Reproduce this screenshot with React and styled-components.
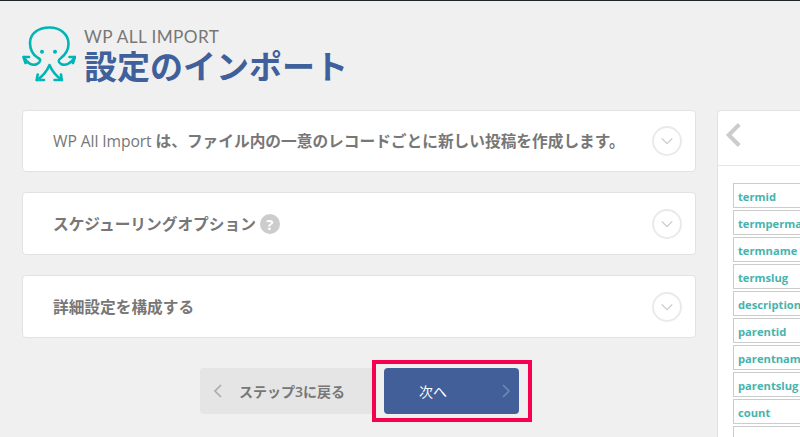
import styled, { createGlobalStyle } from 'styled-components';

const GlobalStyle = createGlobalStyle`
    html, body {
        margin: 0;
        padding: 0;
        background-color: #f1f1f1;
    }
    * {
        box-sizing: border-box;
    }
`;

const fontStack = `"Open Sans", "Noto Sans CJK JP", sans-serif`;

const Page = styled.div`
    width: 800px;
    height: 437px;
    overflow: hidden;
    border-top: 1px solid #1d2327;
    background-color: #f0f0f0;
    font-family: ${fontStack};
    padding: 24px 0 0 22px;
`;

const Header = styled.header`
    display: flex;
    align-items: flex-start;
    height: 85px;
    gap: 8px;
`;

const Titles = styled.div`
    display: flex;
    flex-direction: column;
    padding-top: 2px;
`;

const Brand = styled.div`
    font-family: Lato, sans-serif;
    font-size: 17.2px;
    line-height: 20px;
    letter-spacing: 0.4px;
    color: #777;
`;

const Title = styled.h1`
    margin: 1px 0 0;
    font-size: 33px;
    line-height: 38px;
    font-weight: 700;
    color: #40609b;
    white-space: nowrap;
`;

const Columns = styled.div`
    display: flex;
    align-items: flex-start;
    gap: 21px;
    width: 900px;
`;

const Main = styled.main`
    display: flex;
    flex-direction: column;
    width: 674px;
    flex-shrink: 0;
`;

const Card = styled.section`
    display: flex;
    align-items: center;
    justify-content: space-between;
    height: ${(p) => p.$height}px;
    margin-bottom: 20px;
    padding: 0 13px 0 30px;
    background-color: white;
    border: 1px solid #e2e2e2;
    border-radius: 4px;
`;

const CardTitle = styled.h3`
    margin: 0;
    font-size: 15.7px;
    line-height: 20px;
    font-weight: 600;
    color: #777;
    white-space: nowrap;
`;

const Latin = styled.span`
    font-weight: 400;
    letter-spacing: -0.1px;
`;

const Help = styled.span`
    display: inline-flex;
    align-items: center;
    justify-content: center;
    width: 20px;
    height: 20px;
    margin-left: 4px;
    vertical-align: top;
    border-radius: 50%;
    background-color: #ccc;
    color: white;
    font-size: 15px;
    font-weight: 700;
`;

const Toggle = styled.span`
    display: flex;
    align-items: center;
    justify-content: center;
    width: 30px;
    height: 30px;
    border: 2px solid #eaeaea;
    border-radius: 50%;
`;

const Actions = styled.div`
    display: flex;
    align-items: center;
    margin: 2px 0 0 178px;
`;

const BackButton = styled.button`
    display: flex;
    align-items: center;
    width: 172px;
    height: 46px;
    padding: 0 0 0 10px;
    gap: 13px;
    border: 0;
    border-radius: 4px 0 0 4px;
    background-color: #e4e5e4;
    color: #777;
    font-family: ${fontStack};
    font-size: 14px;
    font-weight: 600;
`;

const Highlight = styled.div`
    padding: 4px 9px 4px 8px;
    border: 4px solid #f6004f;
`;

const NextButton = styled.button`
    display: flex;
    align-items: center;
    justify-content: space-between;
    width: 135px;
    height: 46px;
    padding: 0 5px 0 35px;
    border: 0;
    border-radius: 4px;
    background-color: #425f9a;
    color: white;
    font-family: ${fontStack};
    font-size: 14px;
    font-weight: 400;
`;

const Side = styled.aside`
    width: 200px;
    flex-shrink: 0;
    background-color: white;
    border: 1px solid #e2e2e2;
    border-radius: 4px 0 0 0;
    height: 340px;
`;

const SideHead = styled.div`
    display: flex;
    align-items: center;
    height: 55px;
    padding: 0 0 7px 2px;
    border-bottom: 1px solid #e6e6e6;
`;

const ChipList = styled.ul`
    display: flex;
    flex-direction: column;
    gap: 2px;
    margin: 0;
    padding: 17px 0 0 15px;
    list-style: none;
`;

const Chip = styled.li`
    display: flex;
    align-items: center;
    width: 120px;
    height: 25px;
    padding: 2px 0 0 4px;
    border: 1px solid #ccc;
    background-color: white;
    color: #46b3ad;
    font-size: 11.2px;
    font-weight: 700;
    white-space: nowrap;
    overflow: hidden;
`;

function Octopus() {
    return (
        <svg width="54" height="57" viewBox="6 5 54 57" fill="none" stroke="#00b5b5" strokeWidth="2.6" strokeLinecap="round" strokeLinejoin="round">
            <path d="M8 37 C11 44 17 46 21 44 C25 42 25 39 22 38 C17 35 14 29 14 23 C14 13 23 7.5 33.5 7.5 C44 7.5 52.5 14 52.5 24 C52.5 30 50 34 45 38 C42 40 42 42 45 44 C49 46 55 44 59 37" />
            <path d="M33.5 45 C31 51 27 56 21 60 M33.5 45 C36 51 40 56 46 60" />
            <path d="M13 37 L7.5 37 L9.5 43 M53.5 37 L59 37 L57 43 M21.7 54.5 L20.7 60 L28 60 M45 54.5 L45.7 60 L38.5 60" />
            <circle cx="26" cy="31.7" r="2" fill="#00b5b5" stroke="none" />
            <circle cx="39" cy="31.7" r="2" fill="#00b5b5" stroke="none" />
        </svg>
    );
}

function Chevron({ direction = 'left', color = '#bbb', size = 16, strokeWidth = 1.6 }) {
    const d = direction === 'left' ? 'M11 2 L5 8 L11 14' : direction === 'right' ? 'M5 2 L11 8 L5 14' : 'M2 5 L8 11 L14 5';
    return (
        <svg width={size} height={size} viewBox="0 0 16 16" fill="none" stroke={color} strokeWidth={strokeWidth}>
            <path d={d} />
        </svg>
    );
}

const fields = ['termid', 'termpermalink', 'termname', 'termslug', 'description', 'parentid', 'parentname', 'parentslug', 'count', ''];

function App() {
    return (
        <>
            <GlobalStyle />
            <Page>
                <Header>
                    <Octopus />
                    <Titles>
                        <Brand>WP ALL IMPORT</Brand>
                        <Title>設定のインポート</Title>
                    </Titles>
                </Header>
                <Columns>
                    <Main>
                        <Card $height={62}>
                            <CardTitle><Latin>WP All Import </Latin>は、ファイル内の一意のレコードごとに新しい投稿を作成します。</CardTitle>
                            <Toggle><Chevron direction="down" color="#ccc" size={14} /></Toggle>
                        </Card>
                        <Card $height={63}>
                            <CardTitle>スケジューリングオプション<Help>?</Help></CardTitle>
                            <Toggle><Chevron direction="down" color="#ccc" size={14} /></Toggle>
                        </Card>
                        <Card $height={63}>
                            <CardTitle>詳細設定を構成する</CardTitle>
                            <Toggle><Chevron direction="down" color="#ccc" size={14} /></Toggle>
                        </Card>
                        <Actions>
                            <BackButton>
                                <Chevron direction="left" color="#aaa" />
                                ステップ3に戻る
                            </BackButton>
                            <Highlight>
                                <NextButton>
                                    次へ
                                    <Chevron direction="right" color="#7186b3" />
                                </NextButton>
                            </Highlight>
                        </Actions>
                    </Main>
                    <Side>
                        <SideHead>
                            <Chevron direction="left" color="#ccc" size={28} strokeWidth={2.3} />
                        </SideHead>
                        <ChipList>
                            {fields.map((field, index) => <Chip key={index}>{field}</Chip>)}
                        </ChipList>
                    </Side>
                </Columns>
            </Page>
        </>
    );
}

export default App;
